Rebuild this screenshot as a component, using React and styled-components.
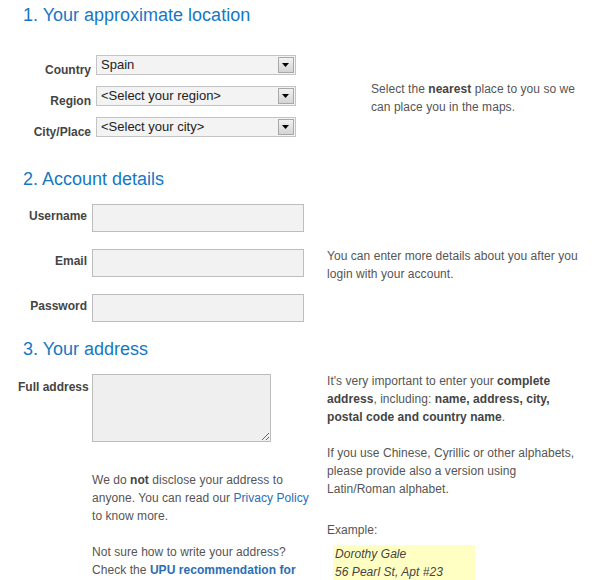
import React from 'react'
import styled, { createGlobalStyle } from 'styled-components'

const GlobalStyle = createGlobalStyle`
	body {
		margin: 0;
		background: #fff;
		font-family: 'Liberation Sans', Arial, sans-serif;
		color: #555;
	}
`

const Page = styled.div`
	padding: 4px 0 40px 18px;
	width: 593px;
	box-sizing: border-box;
`

const Heading = styled.h2`
	margin: ${p => p.$top || 0}px 0 ${p => p.$bottom || 14}px 5px;
	font-size: 18px;
	line-height: 22px;
	font-weight: normal;
	color: #1677c5;
`

const Section = styled.div`
	display: flex;
	align-items: ${p => (p.$top ? 'flex-start' : 'center')};
`

const Fields = styled.div`
	width: ${p => p.$width}px;
	display: flex;
	flex-direction: column;
	gap: ${p => p.$gap}px;
	flex-shrink: 0;
`

const Row = styled.div`
	display: grid;
	grid-template-columns: ${p => p.$label}px 1fr;
	column-gap: 5px;
	align-items: start;
`

const Label = styled.label`
	font-size: 12px;
	line-height: ${p => p.$line || 14}px;
	font-weight: bold;
	color: #444;
	text-align: right;
	padding-top: ${p => p.$pad}px;
	white-space: nowrap;
`

const SelectBox = styled.div`
	height: 20px;
	box-sizing: border-box;
	border: 1px solid #c4c4c4;
	background: #f3f3f3;
	display: flex;
	align-items: center;
	padding: 0 1px 0 4px;
	font-size: 13px;
	line-height: 18px;
	color: #222;
`

const SelectText = styled.span`
	flex: 1;
`

const ArrowButton = styled.span`
	width: 16px;
	height: 16px;
	box-sizing: border-box;
	border: 1px solid #a8a8a8;
	background: linear-gradient(#f2f2f2, #d4d4d4);
	display: flex;
	align-items: center;
	justify-content: center;
`

const TextInput = styled.input`
	width: 212px;
	height: 28px;
	box-sizing: border-box;
	border: 1px solid #bdbdbd;
	background: #f2f2f2;
	margin: 0;
	padding: 3px 5px;
	font: 13px 'Liberation Sans', Arial, sans-serif;
	outline: none;
`

const TextArea = styled.textarea`
	width: 179px;
	height: 68px;
	box-sizing: border-box;
	border: 1px solid #bdbdbd;
	background: #efefef;
	margin: 0;
	padding: 3px 5px;
	font: 13px 'Liberation Sans', Arial, sans-serif;
	display: block;
	outline: none;
`

const Help = styled.div`
	width: ${p => p.$width}px;
	margin-left: ${p => p.$offset}px;
	margin-top: ${p => p.$shift || 0}px;
	font-size: 12px;
	line-height: 18px;
	letter-spacing: 0.05px;
	color: #555;

	p {
		margin: 0 0 18px;
	}
	p:last-child {
		margin-bottom: 0;
	}
	b {
		color: #444;
	}
`

const LeftColumn = styled.div`
	width: 299px;
	flex-shrink: 0;
`

const Note = styled.div`
	margin: 29px 0 0 74px;
	width: 226px;
	font-size: 12px;
	line-height: 18px;
	letter-spacing: 0.05px;

	p {
		margin: 0 0 18px;
	}
	b {
		color: #444;
	}
`

const Link = styled.a`
	color: #2a6db5;
	text-decoration: none;
	font-weight: ${p => (p.$strong ? 'bold' : 'normal')};
`

const ExampleTitle = styled.p`
	&& {
		margin: 23px 0 6px;
	}
`

const ExampleBox = styled.div`
	width: 142px;
	margin-left: 6px;
	padding: 0 2px;
	box-sizing: border-box;
	background: #ffffc4;
	font-style: italic;
	color: #444;
	font-size: 12px;
	line-height: 18px;
`

const Select = ({ value }) => (
	<SelectBox>
		<SelectText>{value}</SelectText>
		<ArrowButton>
			<svg width="8" height="5" viewBox="0 0 8 5">
				<path d="M0 0h7L3.5 4z" fill="#000" />
			</svg>
		</ArrowButton>
	</SelectBox>
)

export default function App() {
	return (
		<Page>
			<GlobalStyle />
			<Heading $bottom={29}>1. Your approximate location</Heading>
			<Section>
				<Fields $width={278} $gap={11}>
					<Row $label={73}>
						<Label $pad={10} $line={10}>Country</Label>
						<Select value="Spain" />
					</Row>
					<Row $label={73}>
						<Label $pad={10} $line={10}>Region</Label>
						<Select value="<Select your region>" />
					</Row>
					<Row $label={73}>
						<Label $pad={10} $line={10}>City/Place</Label>
						<Select value="<Select your city>" />
					</Row>
				</Fields>
				<Help $width={220} $offset={75} $shift={3}>
					Select the <b>nearest</b> place to you so we can place you in the
					maps.
				</Help>
			</Section>

			<Heading $top={31}>2. Account details</Heading>
			<Section>
				<Fields $width={286} $gap={17}>
					<Row $label={69}>
						<Label $pad={5}>Username</Label>
						<TextInput type="text" />
					</Row>
					<Row $label={69}>
						<Label $pad={5}>Email</Label>
						<TextInput type="text" />
					</Row>
					<Row $label={69}>
						<Label $pad={5}>Password</Label>
						<TextInput type="password" />
					</Row>
				</Fields>
				<Help $width={256} $offset={23} $shift={3}>
					You can enter more details about you after you login with your
					account.
				</Help>
			</Section>

			<Heading $top={16}>3. Your address</Heading>
			<Section $top>
				<LeftColumn>
					<Row $label={69}>
						<Label $pad={6}>Full address</Label>
						<TextArea />
					</Row>
					<Note>
						<p>
							We do <b>not</b> disclose your address to anyone. You can read
							our <Link href="#">Privacy Policy</Link> to know more.
						</p>
						<p>
							Not sure how to write your address? Check the{' '}
							<Link href="#" $strong>
								UPU recommendation for addresses
							</Link>
							.
						</p>
					</Note>
				</LeftColumn>
				<Help $width={254} $offset={10} $shift={-2}>
					<p>
						It's very important to enter your <b>complete address</b>,
						including: <b>name, address, city, postal code and country name</b>.
					</p>
					<p>
						If you use Chinese, Cyrillic or other alphabets, please provide also
						a version using Latin/Roman alphabet.
					</p>
					<ExampleTitle>Example:</ExampleTitle>
					<ExampleBox>
						Dorothy Gale
						<br />
						56 Pearl St, Apt #23
						<br />
						Kansas City, KS 66101
						<br />
						USA
					</ExampleBox>
				</Help>
			</Section>
		</Page>
	)
}
